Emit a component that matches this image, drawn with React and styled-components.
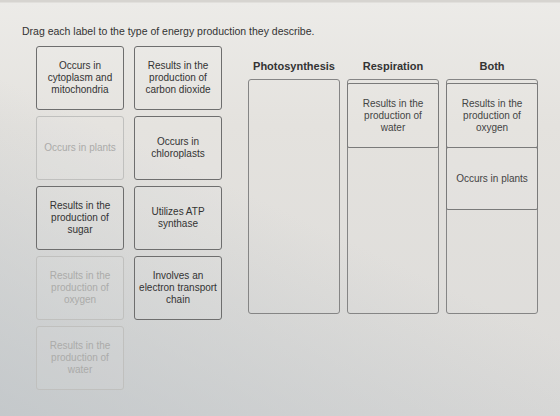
import React from "react";
import styled, { createGlobalStyle } from "styled-components";

const Global = createGlobalStyle`
  html, body { margin: 0; padding: 0; }
  body {
    width: 560px;
    height: 416px;
    overflow: hidden;
    font-family: "Liberation Sans", Arial, sans-serif;
    background:
      linear-gradient(205deg, rgba(230,228,224,0) 50%, rgba(188,194,198,0.75) 100%),
      linear-gradient(180deg, #d6d4d0 0px, #d6d4d0 2px, #ecebe8 3px, #e4e2de 30%, #dcdbd9 100%);
  }
`;

const Page = styled.div`
  box-sizing: border-box;
  width: 560px;
  height: 416px;
  padding: 25px 0 0 22px;
  color: #333;
`;

const Instruction = styled.div`
  font-size: 10.5px;
  line-height: 13px;
  color: #333;
`;

const Workspace = styled.div`
  display: flex;
  align-items: flex-start;
  margin-top: 8px;
`;

const LabelGrid = styled.div`
  display: grid;
  grid-template-columns: 88px 88px;
  grid-auto-rows: 64px;
  gap: 6px 10px;
  margin-left: 14px;
`;

const Card = styled.div`
  box-sizing: border-box;
  display: flex;
  align-items: center;
  justify-content: center;
  text-align: center;
  padding: 0 4px;
  border: 1px solid ${(p) => (p.$used ? "#c0c0be" : "#6e6e6e")};
  border-radius: 3px;
  color: ${(p) => (p.$used ? "#ababa9" : "#333")};
  font-size: 10px;
  line-height: 12px;
  background: rgba(255, 255, 255, 0.06);
`;

const Bins = styled.div`
  display: flex;
  gap: 7px;
  margin-left: 26px;
`;

const BinColumn = styled.div`
  display: flex;
  flex-direction: column;
  width: 92px;
`;

const BinTitle = styled.div`
  margin-top: 14px;
  height: 13px;
  line-height: 13px;
  font-size: 11px;
  font-weight: bold;
  text-align: center;
  color: #333;
`;

const Bin = styled.div`
  box-sizing: border-box;
  margin-top: 6px;
  height: 235px;
  border: 1px solid #858585;
  border-radius: 3px;
  padding-top: ${(p) => (p.$filled ? "3px" : "0")};
  display: flex;
  flex-direction: column;
`;

const BinCard = styled(Card)`
  height: ${(p) => p.$h}px;
  border-radius: 2px;
  margin: 0 -1px;
  border-color: #7a7a7a;
  color: #444;
  & + & {
    margin-top: -1px;
  }
`;

const labels = [
  { text: ["Occurs in", "cytoplasm and", "mitochondria"] },
  { text: ["Results in the", "production of", "carbon dioxide"] },
  { text: ["Occurs in plants"], used: true },
  { text: ["Occurs in", "chloroplasts"] },
  { text: ["Results in the", "production of", "sugar"] },
  { text: ["Utilizes ATP", "synthase"] },
  { text: ["Results in the", "production of", "oxygen"], used: true },
  { text: ["Involves an", "electron transport", "chain"] },
  { text: ["Results in the", "production of", "water"], used: true },
];

const bins = [
  { title: "Photosynthesis", items: [] },
  { title: "Respiration", items: [{ text: ["Results in the", "production of", "water"], h: 65 }] },
  {
    title: "Both",
    items: [
      { text: ["Results in the", "production of", "oxygen"], h: 65 },
      { text: ["Occurs in plants"], h: 63 },
    ],
  },
];

const Lines = ({ text }) =>
  text.map((t, i) => (
    <React.Fragment key={i}>
      {i > 0 && <br />}
      {t}
    </React.Fragment>
  ));

export default function App() {
  return (
    <>
      <Global />
      <Page>
        <Instruction>Drag each label to the type of energy production they describe.</Instruction>
        <Workspace>
          <LabelGrid>
            {labels.map((l, i) => (
              <Card key={i} $used={l.used}>
                <span>
                  <Lines text={l.text} />
                </span>
              </Card>
            ))}
          </LabelGrid>
          <Bins>
            {bins.map((b) => (
              <BinColumn key={b.title}>
                <BinTitle>{b.title}</BinTitle>
                <Bin $filled={b.items.length > 0}>
                  {b.items.map((it, i) => (
                    <BinCard key={i} $h={it.h}>
                      <span>
                        <Lines text={it.text} />
                      </span>
                    </BinCard>
                  ))}
                </Bin>
              </BinColumn>
            ))}
          </Bins>
        </Workspace>
      </Page>
    </>
  );
}
